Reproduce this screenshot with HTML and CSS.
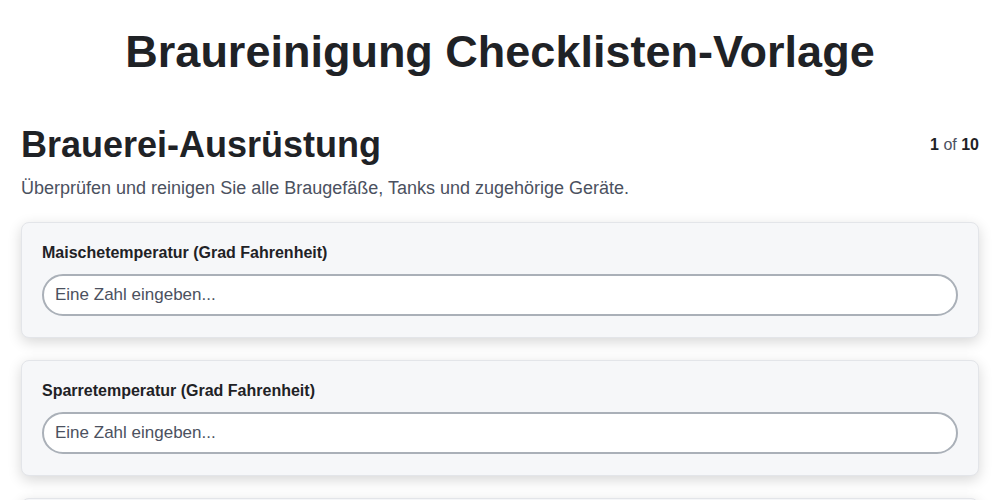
FILE: index.html
```html
<!DOCTYPE html>
<html lang="de">
<head>
<meta charset="utf-8">
<title>Braureinigung Checklisten-Vorlage</title>
<link rel="stylesheet" href="styles.css">
</head>
<body>
<main class="page">
  <h1 class="title">Braureinigung Checklisten-Vorlage</h1>
  <section class="section">
    <div class="section-head">
      <h2 class="section-title">Brauerei-Ausrüstung</h2>
      <div class="pager"><b>1</b> of <b>10</b></div>
    </div>
    <p class="section-desc">Überprüfen und reinigen Sie alle Braugefäße, Tanks und zugehörige Geräte.</p>
    <div class="cards">
      <div class="card">
        <label class="card-label">Maischetemperatur (Grad Fahrenheit)</label>
        <input class="card-input" type="text" placeholder="Eine Zahl eingeben...">
      </div>
      <div class="card">
        <label class="card-label">Sparretemperatur (Grad Fahrenheit)</label>
        <input class="card-input" type="text" placeholder="Eine Zahl eingeben...">
      </div>
      <div class="card">
        <label class="card-label">Würzekochzeit (Minuten)</label>
        <input class="card-input" type="text" placeholder="Eine Zahl eingeben...">
      </div>
    </div>
  </section>
</main>
</body>
</html>
```

FILE: styles.css
```css
* { box-sizing: border-box; }
html, body { margin: 0; padding: 0; background: #ffffff; }
body {
  font-family: "Liberation Sans", Arial, sans-serif;
  color: #1f2226;
}
.page {
  padding: 0 21px;
}
.title {
  margin: 25px 0 0;
  font-size: 45px;
  line-height: 54px;
  font-weight: 700;
  text-align: center;
  color: #1f2226;
}
.section {
  margin-top: 45px;
}
.section-head {
  display: flex;
  justify-content: space-between;
  align-items: flex-start;
}
.section-title {
  margin: 0;
  font-size: 36px;
  line-height: 42px;
  font-weight: 700;
  color: #1f2226;
}
.pager {
  margin-top: 11px;
  font-size: 16px;
  line-height: 19px;
  color: #4b5160;
}
.pager b { color: #1f2226; }
.section-desc {
  margin: 12px 0 0;
  font-size: 18px;
  line-height: 21px;
  color: #4b5160;
}
.cards {
  margin-top: 23px;
  display: flex;
  flex-direction: column;
  gap: 22px;
}
.card {
  background: #f6f7f9;
  border: 1px solid #e3e5e9;
  border-radius: 8px;
  padding: 20px 20px 21px;
  box-shadow: 0 4px 14px rgba(0, 0, 0, 0.16);
  display: flex;
  flex-direction: column;
}
.card-label {
  font-size: 16px;
  line-height: 20px;
  font-weight: 700;
  color: #1f2226;
}
.card-input {
  margin-top: 11px;
  height: 42px;
  border: 2px solid #aab0b8;
  border-radius: 21px;
  background: #ffffff;
  padding: 0 11px;
  font-family: "Liberation Sans", Arial, sans-serif;
  font-size: 17px;
  color: #1f2226;
  outline: none;
}
.card-input::placeholder { color: #4b5160; opacity: 1; }
```
